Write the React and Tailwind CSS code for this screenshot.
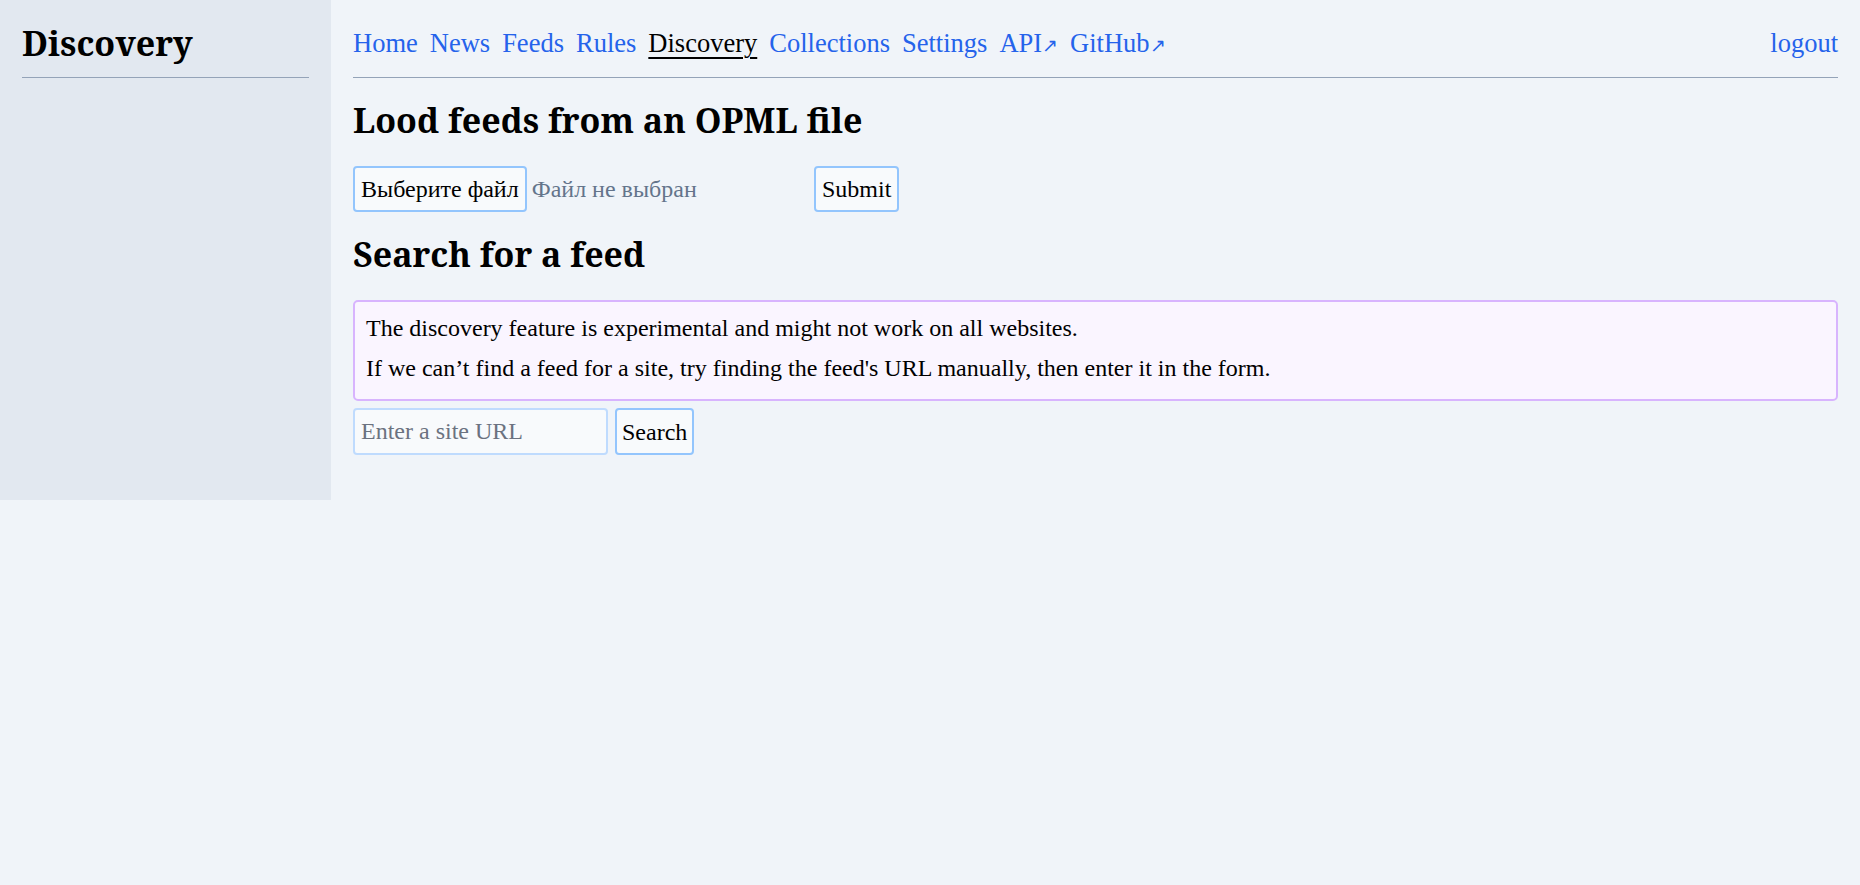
import React from 'react';

const NAV = [
    { label: 'Home' },
    { label: 'News' },
    { label: 'Feeds' },
    { label: 'Rules' },
    { label: 'Discovery', active: true },
    { label: 'Collections' },
    { label: 'Settings' },
    { label: 'API', external: true },
    { label: 'GitHub', external: true },
];

const serif = "font-['Liberation_Serif',serif]";
const heading = "font-['Noto_Serif','Liberation_Serif',serif] font-bold text-[34px] leading-[40px] text-black";

const App = () => {
    return (
        <div className={`min-h-screen bg-[#f0f4f9] text-black ${serif}`}>
            <div className="flex items-stretch">
                {/* Sidebar */}
                <aside className="w-[331px] shrink-0 bg-[#e2e8f0] px-[22px] pt-[23px]">
                    <h1 className={`${heading} pb-[14px] border-b border-[#94a3b8]`}>Discovery</h1>
                </aside>

                {/* Main */}
                <main className="flex-1 px-[22px] pb-[45px]">
                    <header className="flex items-start justify-between pt-[26px] pb-[17px] border-b border-[#94a3b8]">
                        <nav className="flex h-[34px] gap-[12px] text-[26.5px] leading-[34px]">
                            {NAV.map((item) => (
                                <a
                                    key={item.label}
                                    href="#"
                                    className={item.active ? 'h-[34px] text-black underline decoration-2 underline-offset-[5px]' : 'h-[34px] text-[#2563eb]'}
                                >
                                    {item.label}
                                    {item.external && <span className="text-[19px] leading-none">↗</span>}
                                </a>
                            ))}
                        </nav>
                        <a href="#" className="h-[34px] text-[26.5px] leading-[34px] text-[#2563eb]">logout</a>
                    </header>

                    <h2 className={`${heading} mt-[22px]`}>Lood feeds from an OPML file</h2>
                    <form className="mt-[26px] flex items-center gap-[6px] text-[24px]">
                        <div className="flex items-center w-[455px]">
                            <span className="h-[46px] px-[6px] flex items-center rounded-[4px] border-2 border-[#93c5fd] bg-[#f8fafc]">Выберите файл</span>
                            <span className="ml-[5px] text-[#64748b]">Файл не выбран</span>
                        </div>
                        <button type="button" className="h-[46px] px-[6px] rounded-[4px] border-2 border-[#93c5fd] bg-[#f8fafc] text-[24px]">Submit</button>
                    </form>

                    <h2 className={`${heading} mt-[22px]`}>Search for a feed</h2>
                    <div className="mt-[26px] rounded-[5px] border-2 border-[#d8b4fe] bg-[#faf5ff] px-[11px] pt-[10px] pb-[7px] text-[24px] leading-[32px]">
                        <p className="mb-2">The discovery feature is experimental and might not work on all websites.</p>
                        <p className="mb-2">If we can’t find a feed for a site, try finding the feed's URL manually, then enter it in the form.</p>
                    </div>
                    <form className="mt-[7px] flex items-center gap-[7px] text-[24px]">
                        <input
                            type="text"
                            placeholder="Enter a site URL"
                            className="h-[47px] w-[255px] px-[6px] rounded-[4px] border-2 border-[#bfdbfe] bg-[#f8fafc] placeholder:text-[#6b7280] outline-none"
                        />
                        <button type="button" className="h-[47px] px-[5px] rounded-[4px] border-2 border-[#93c5fd] bg-[#f8fafc]">Search</button>
                    </form>
                </main>
            </div>
        </div>
    );
};

export default App;
